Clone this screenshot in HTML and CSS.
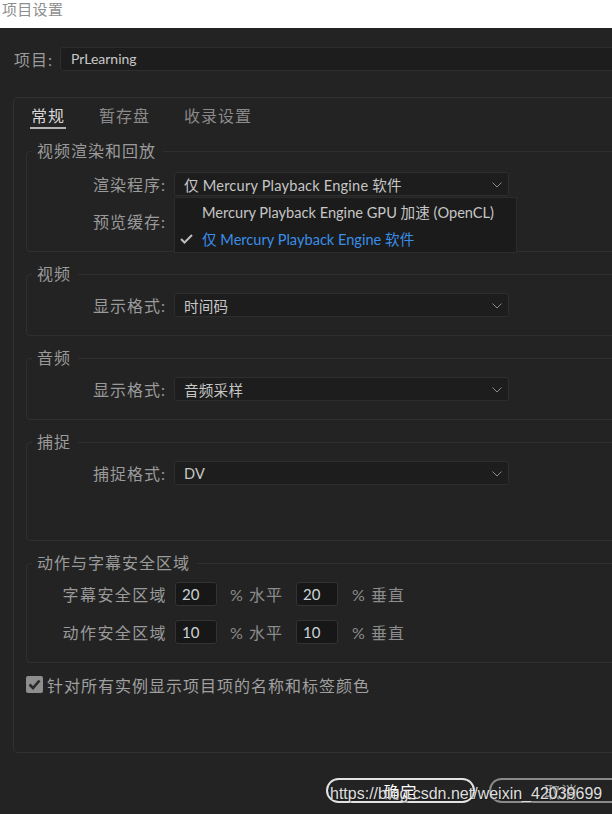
FILE: index.html
```html
<!DOCTYPE html>
<html lang="zh-CN">
<head>
<meta charset="utf-8">
<title>项目设置</title>
<link rel="stylesheet" href="styles.css">
</head>
<body>
<div class="titlebar">项目设置</div>
<div class="project">
  <span class="project-label">项目:</span>
  <div class="project-input">PrLearning</div>
</div>
<div class="panel">
  <div class="tabs">
    <span class="tab active">常规</span>
    <span class="tab">暂存盘</span>
    <span class="tab">收录设置</span>
  </div>

  <fieldset class="group group-first">
    <legend>视频渲染和回放</legend>
    <div class="row">
      <span class="label">渲染程序:</span>
      <div class="select-wrap">
        <div class="select"><span class="value">仅 Mercury Playback Engine 软件</span><svg class="chev" width="10" height="6" viewBox="0 0 10 6"><path d="M0.5 0.5 L5 5 L9.5 0.5" fill="none" stroke="#8a8a8a" stroke-width="1"/></svg></div>
        <div class="dropdown">
          <div class="item">Mercury Playback Engine GPU 加速 (OpenCL)</div>
          <div class="item checked"><svg class="check" width="13" height="10" viewBox="0 0 13 10"><path d="M1 5 L4.5 8.5 L12 1" fill="none" stroke="#bdbdbd" stroke-width="2"/></svg>仅 Mercury Playback Engine 软件</div>
        </div>
      </div>
    </div>
    <div class="row">
      <span class="label">预览缓存:</span>
      <div class="select-wrap">
        <div class="select"><span class="value"></span></div>
      </div>
    </div>
  </fieldset>

  <fieldset class="group">
    <legend>视频</legend>
    <div class="row">
      <span class="label">显示格式:</span>
      <div class="select-wrap">
        <div class="select"><span class="value">时间码</span><svg class="chev" width="10" height="6" viewBox="0 0 10 6"><path d="M0.5 0.5 L5 5 L9.5 0.5" fill="none" stroke="#8a8a8a" stroke-width="1"/></svg></div>
      </div>
    </div>
  </fieldset>

  <fieldset class="group">
    <legend>音频</legend>
    <div class="row">
      <span class="label">显示格式:</span>
      <div class="select-wrap">
        <div class="select"><span class="value">音频采样</span><svg class="chev" width="10" height="6" viewBox="0 0 10 6"><path d="M0.5 0.5 L5 5 L9.5 0.5" fill="none" stroke="#8a8a8a" stroke-width="1"/></svg></div>
      </div>
    </div>
  </fieldset>

  <fieldset class="group group-capture">
    <legend>捕捉</legend>
    <div class="row">
      <span class="label">捕捉格式:</span>
      <div class="select-wrap">
        <div class="select"><span class="value">DV</span><svg class="chev" width="10" height="6" viewBox="0 0 10 6"><path d="M0.5 0.5 L5 5 L9.5 0.5" fill="none" stroke="#8a8a8a" stroke-width="1"/></svg></div>
      </div>
    </div>
  </fieldset>

  <fieldset class="group">
    <legend>动作与字幕安全区域</legend>
    <div class="safe-row">
      <span class="safe-label">字幕安全区域</span>
      <div class="num">20</div>
      <span class="unit">% 水平</span>
      <div class="num">20</div>
      <span class="unit unit-last">% 垂直</span>
    </div>
    <div class="safe-row">
      <span class="safe-label">动作安全区域</span>
      <div class="num">10</div>
      <span class="unit">% 水平</span>
      <div class="num">10</div>
      <span class="unit unit-last">% 垂直</span>
    </div>
  </fieldset>

  <div class="check-row">
    <span class="checkbox"><svg width="13" height="11" viewBox="0 0 13 11"><path d="M1.5 5.5 L5 9 L11.5 1.5" fill="none" stroke="#2a2a2a" stroke-width="2.6"/></svg></span>
    <span class="check-text">针对所有实例显示项目项的名称和标签颜色</span>
  </div>
</div>

<div class="footer">
  <div class="btn primary">确定</div>
  <div class="btn secondary">取消</div>
</div>

<div class="watermark">https://blog.csdn.net/weixin_42039699</div>
</body>
</html>
```

FILE: styles.css
```css
html, body {
  margin: 0;
  padding: 0;
}

body {
  background: #232323;
  font-family: Lato, "Noto Sans CJK SC", sans-serif;
  font-size: 16px;
  color: #9a9a9a;
  width: 612px;
  height: 814px;
  overflow: hidden;
  position: relative;
}

.titlebar {
  height: 28px;
  background: #ffffff;
  color: #8e8e8e;
  font-size: 15px;
  line-height: 19px;
  padding-left: 2px;
  letter-spacing: 0.3px;
  box-sizing: border-box;
}

.project {
  display: flex;
  align-items: center;
  padding: 19px 0 0 14px;
  height: 24px;
}

.project-label {
  width: 46px;
  flex: none;
  letter-spacing: 1px;
}

.project-input {
  flex: none;
  width: 600px;
  height: 24px;
  box-sizing: border-box;
  border: 1px solid #2e2e2e;
  border-radius: 3px;
  background: #1d1d1d;
  padding-left: 10px;
  color: #c8c8c8;
  font-size: 14px;
  line-height: 22px;
}

.panel {
  margin: 26px 0 0 13px;
  width: 640px;
  height: 656px;
  box-sizing: border-box;
  border: 1px solid #303030;
  border-radius: 4px;
}

.tabs {
  display: flex;
  gap: 32px;
  padding: 8px 0 0 16px;
}

.tab {
  line-height: 20px;
  padding: 0 1px 1px;
  letter-spacing: 1px;
  color: #8a8a8a;
  border-bottom: 2px solid transparent;
}

.tab.active {
  color: #d6d6d6;
  border-bottom-color: #b4b4b4;
}

.group {
  margin: 13px 0 0 12px;
  border: 1px solid #2f2f2f;
  border-radius: 4px;
  padding: 10px 0 18px;
  min-width: 0;
}

.group-first {
  padding-top: 12px;
}

.group-capture {
  padding-bottom: 55px;
}

.group legend {
  margin-left: 5px;
  padding: 0 7px 0 5px;
  line-height: 18px;
  letter-spacing: 1px;
  color: #9a9a9a;
}

.row {
  display: flex;
  align-items: center;
  height: 24px;
}

.row + .row {
  margin-top: 13px;
}

.label {
  width: 139px;
  flex: none;
  text-align: right;
  margin-right: 8px;
  letter-spacing: 1px;
}

.select-wrap {
  position: relative;
  flex: none;
  width: 335px;
}

.select {
  height: 24px;
  box-sizing: border-box;
  border: 1px solid #2e2e2e;
  border-radius: 3px;
  background: #1d1d1d;
  padding: 0 6px 0 9px;
  display: flex;
  align-items: center;
  justify-content: space-between;
  color: #c6c6c6;
  font-size: 14.6px;
  letter-spacing: 0.2px;
}

.chev {
  display: block;
  margin-top: 1px;
}

.dropdown {
  position: absolute;
  left: 0;
  top: 25px;
  width: 343px;
  box-sizing: border-box;
  background: #1b1b1b;
  border: 1px solid #2c2c2c;
  z-index: 2;
}

.item {
  position: relative;
  height: 27px;
  display: flex;
  align-items: center;
  padding-left: 27px;
  color: #c6c6c6;
  font-size: 14.6px;
  letter-spacing: 0;
  white-space: nowrap;
}

.item.checked {
  color: #3a8ee8;
}

.check {
  position: absolute;
  left: 5px;
  top: 9px;
}

.safe-row {
  display: flex;
  align-items: center;
  height: 24px;
}

.safe-row + .safe-row {
  margin-top: 14px;
}

.safe-label {
  width: 140px;
  flex: none;
  text-align: right;
  margin-right: 8px;
  letter-spacing: 1.4px;
}

.num {
  flex: none;
  width: 42px;
  height: 24px;
  box-sizing: border-box;
  border: 1px solid #333333;
  border-radius: 3px;
  background: #171717;
  padding-left: 6px;
  color: #ccd3da;
  font-size: 15px;
  line-height: 22px;
}

.unit {
  flex: none;
  width: 79px;
  box-sizing: border-box;
  padding-left: 13px;
  color: #8c8c8c;
  letter-spacing: 1px;
}

.unit-last {
  padding-left: 14px;
}

.check-row {
  display: flex;
  align-items: center;
  margin: 13px 0 0 12px;
  height: 17px;
}

.checkbox {
  flex: none;
  width: 17px;
  height: 17px;
  background: #8e8e8e;
  border-radius: 2px;
  display: flex;
  align-items: center;
  justify-content: center;
}

.checkbox svg {
  display: block;
}

.check-text {
  margin-left: 4px;
  letter-spacing: 1px;
  color: #a0a0a0;
  white-space: nowrap;
}

.footer {
  display: flex;
  gap: 14px;
  padding-left: 326px;
  margin-top: 25px;
}

.btn {
  flex: none;
  width: 149px;
  height: 25px;
  box-sizing: border-box;
  border: 2px solid #e2e2e2;
  border-radius: 13px;
  color: #ffffff;
  display: flex;
  align-items: center;
  justify-content: center;
  font-size: 16px;
  letter-spacing: 1px;
}

.btn.secondary {
  width: 144px;
  border-color: #8a8a8a;
  color: #9a9a9a;
}

.watermark {
  position: absolute;
  left: 330px;
  top: 785px;
  font-family: "Liberation Sans", Arial, sans-serif;
  font-size: 16px;
  line-height: 18px;
  color: #dedede;
  text-shadow: 1px 1px 0 rgba(0, 0, 0, 0.35);
  white-space: nowrap;
  z-index: 5;
}
```
